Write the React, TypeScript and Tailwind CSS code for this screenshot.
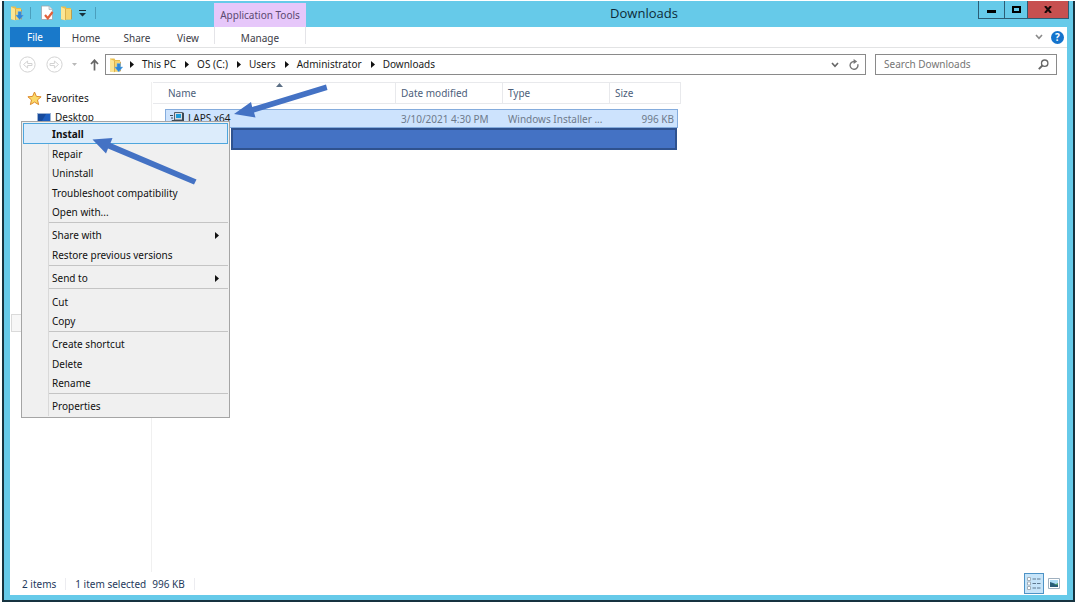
import type { ReactNode } from 'react';

interface MenuEntry {
  label: string;
  submenu?: boolean;
}

const menuGroups: MenuEntry[][] = [
  [
    { label: 'Install' },
    { label: 'Repair' },
    { label: 'Uninstall' },
    { label: 'Troubleshoot compatibility' },
    { label: 'Open with...' },
  ],
  [{ label: 'Share with', submenu: true }, { label: 'Restore previous versions' }],
  [{ label: 'Send to', submenu: true }],
  [{ label: 'Cut' }, { label: 'Copy' }],
  [{ label: 'Create shortcut' }, { label: 'Delete' }, { label: 'Rename' }],
  [{ label: 'Properties' }],
];

const path = ['This PC', 'OS (C:)', 'Users', 'Administrator', 'Downloads'];

const FolderIcon = ({ download = false }: { download?: boolean }) => (
  <svg width="14" height="16" viewBox="0 0 14 16" className="shrink-0" aria-hidden="true">
    <path d="M1 1.5h4.5l.8 1.5H11v11.5H1z" fill="#e9bd4c" />
    <path d="M1 2l4.5 2v11.5L1 14z" fill="#fbe594" />
    <path d="M5.500 4H11v10.500H5.500z" fill="#f6d46f" />
    <path d="M5.500 4v11" stroke="#d0a03c" strokeWidth=".7" />
    <path d="M11 4.500l.8.500v9l-.8.500z" fill="#c9942e" />
    {download && (
      <path d="M8 6.500h3.400V10h2.400L9.700 15 5.600 10H8z" fill="#2f86d6" stroke="#75b8ee" strokeWidth=".5" />
    )}
  </svg>
);

const DocumentIcon = () => (
  <svg width="14" height="16" viewBox="0 0 14 16" className="shrink-0" aria-hidden="true">
    <path d="M1.500 1h7.500l3.500 3.500V14.500h-11z" fill="#fff" stroke="#9aa4ac" strokeWidth=".8" />
    <path d="M9 1v3.500h3.500" fill="#dfe5ea" stroke="#9aa4ac" strokeWidth=".6" />
    <path d="M5 10l2.800 3.200L12.600 7" fill="none" stroke="#e2603a" strokeWidth="2.200" />
  </svg>
);

const CircleArrow = ({ flip = false }: { flip?: boolean }) => (
  <svg width="17" height="17" viewBox="0 0 17 17" className={flip ? 'rotate-180' : ''} aria-hidden="true">
    <circle cx="8.500" cy="8.500" r="7.600" fill="none" stroke="#d3d3d3" />
    <path d="M13 7.500H8.600V5L4.500 8.500l4.100 3.500V9.500H13z" fill="none" stroke="#d3d3d3" />
  </svg>
);

const Triangle = () => (
  <svg width="4" height="7" viewBox="0 0 4 7" className="shrink-0" aria-hidden="true">
    <path d="M0 0l4 3.500L0 7z" fill="#111" />
  </svg>
);

const Chevron = ({ className }: { className: string }) => (
  <svg width="8" height="6" viewBox="0 0 8 6" className={className} aria-hidden="true">
    <path d="M1 1l3 3.400L7 1" fill="none" stroke="currentColor" strokeWidth="1.600" />
  </svg>
);

const TitleBar = () => (
  <header className="flex h-[26px] items-start pl-[6px] pr-[4px]">
    <div className="flex h-[24px] w-[204px] items-center">
      <button aria-label="Downloads folder">
        <FolderIcon download />
      </button>
      <span className="ml-[6px] mr-[9px] h-[12px] w-px bg-[#4b9fbd]" />
      <button aria-label="Properties">
        <DocumentIcon />
      </button>
      <button aria-label="New folder" className="ml-[6px]">
        <FolderIcon />
      </button>
      <button aria-label="Customize toolbar" className="ml-[5px]">
        <svg width="7" height="7" viewBox="0 0 7 7" aria-hidden="true">
          <path d="M0 0h7v1H0zM0 3h7L3.500 6.500z" fill="#16313c" />
        </svg>
      </button>
      <span className="ml-[9px] h-[12px] w-px bg-[#4b9fbd]" />
    </div>
    <div className="mt-[2px] h-[24px] w-[92px] bg-[#e6c7fa] text-center leading-[24px] text-[#5b4a70]">
      Application Tools
    </div>
    <h1 className="flex-1 pl-[4px] text-center font-['Open_Sans','Noto_Sans',sans-serif] text-[13px] leading-[24px] text-[#0d2a38]">
      Downloads
    </h1>
    <div className="flex h-[18px] border border-t-0 border-[#2c5d75]">
      <button aria-label="Minimize" className="flex w-[25px] items-center justify-center">
        <span className="mt-[3px] h-[3px] w-[9px] bg-black" />
      </button>
      <button
        aria-label="Maximize"
        className="flex w-[24px] items-center justify-center border-x border-[#2c5d75]"
      >
        <span className="h-[7px] w-[9px] border-2 border-black" />
      </button>
      <button aria-label="Close" className="flex w-[40px] items-center justify-center bg-[#c75050]">
        <svg width="8" height="7" viewBox="0 0 8 7" aria-hidden="true">
          <path d="M1 0l6 7M7 0L1 7" stroke="#140808" strokeWidth="2" />
        </svg>
      </button>
    </div>
  </header>
);

const RibbonTabs = () => (
  <nav className="flex h-[21px] items-stretch border-b border-[#e2e3e4] text-[#3c3c46]">
    <button className="w-[50px] bg-[#1979ca] pt-px text-white">File</button>
    <button className="w-[52px] pt-[2px]">Home</button>
    <button className="w-[50px] pt-[2px]">Share</button>
    <button className="w-[52px] pt-[2px]">View</button>
    <button className="mb-[3px] w-[92px] border-x border-[#e4e4e8] pt-[4px]">Manage</button>
    <div className="flex flex-1 items-center justify-end gap-[8px] pr-[3px]">
      <button aria-label="Expand ribbon">
        <Chevron className="text-[#8a8a8a]" />
      </button>
      <button
        aria-label="Help"
        className="flex size-[13px] items-center justify-center rounded-full bg-[#1473cc] font-bold leading-[13px] text-white"
      >
        ?
      </button>
    </div>
  </nav>
);

const AddressBar = () => (
  <div className="flex h-[33px] items-center pl-[9px] pr-[10px]">
    <button aria-label="Back">
      <CircleArrow />
    </button>
    <button aria-label="Forward" className="ml-[10px]">
      <CircleArrow flip />
    </button>
    <button aria-label="Recent locations" className="ml-[9px]">
      <svg width="5" height="3" viewBox="0 0 5 3" aria-hidden="true">
        <path d="M0 0h5L2.500 3z" fill="#b9b9b9" />
      </svg>
    </button>
    <button aria-label="Up" className="ml-[13px]">
      <svg width="9" height="12" viewBox="0 0 9 12" aria-hidden="true">
        <path d="M4.500 11.500V1.500M1 5l3.500-3.800L8 5" fill="none" stroke="#666" strokeWidth="1.700" />
      </svg>
    </button>
    <div className="ml-[6px] flex h-[21px] flex-1 items-center border border-[#8a8a8a] pl-[3px] pr-[6px]">
      <FolderIcon download />
      <ol className="ml-[7px] flex flex-1 items-center gap-[9px] text-[#1a1a1a]">
        {path.map((part) => (
          <li key={part} className="flex items-center gap-[8px]">
            <Triangle />
            <a href="#">{part}</a>
          </li>
        ))}
      </ol>
      <button aria-label="Previous locations">
        <Chevron className="text-[#666]" />
      </button>
      <button aria-label="Refresh" className="ml-[10px]">
        <svg width="10" height="11" viewBox="0 0 10 11" aria-hidden="true">
          <path d="M8.700 5.200A3.900 3.900 0 1 1 5 2.500" fill="none" stroke="#777" strokeWidth="1.400" />
          <path d="M4.600 0l3.600 2.500-3.600 2.500z" fill="#777" />
        </svg>
      </button>
    </div>
    <div className="ml-[9px] flex h-[21px] w-[182px] items-center border border-[#8a8a8a] pl-[8px] pr-[7px]">
      <input
        type="text"
        aria-label="Search Downloads"
        placeholder="Search Downloads"
        className="min-w-0 flex-1 outline-none placeholder:text-[#757575]"
      />
      <svg width="11" height="11" viewBox="0 0 11 11" aria-hidden="true">
        <circle cx="6.700" cy="4.200" r="3.200" fill="none" stroke="#666" strokeWidth="1.300" />
        <path d="M4.400 6.500L.8 10.200" stroke="#666" strokeWidth="1.800" />
      </svg>
    </div>
  </div>
);

const Sidebar = () => (
  <aside className="flex w-[142px] shrink-0 flex-col border-r border-[#f0f0f0] pt-[7px] text-[#1a1a1a]">
    <div className="flex h-[19px] items-center gap-[4px] pl-[17px]">
      <svg width="15" height="15" viewBox="0 0 15 15" aria-hidden="true">
        <path
          d="M7.500 1l1.900 4.400 4.700.4-3.600 3.100 1.100 4.700-4.100-2.500-4.100 2.500 1.100-4.700L.9 5.800l4.700-.4z"
          fill="#fbd968"
          stroke="#dd8a2a"
        />
      </svg>
      Favorites
    </div>
    <div className="flex h-[19px] items-center gap-[4px] pl-[27px]">
      <svg width="14" height="12" viewBox="0 0 14 12" aria-hidden="true">
        <path d="M0 1h14v9H0z" fill="#9db4d4" />
        <path d="M1 2h12v7H1z" fill="#1e5fc0" />
        <path d="M1 2h8L5 9H1z" fill="#174a9c" />
        <path d="M4 11h6v1H4z" fill="#8796ab" />
      </svg>
      Desktop
    </div>
    <div className="mx-px mt-[187px] h-[18px] border border-[#dadada] bg-[#f7f7f7]" />
  </aside>
);

const HeaderCell = ({ width, children }: { width: string; children: ReactNode }) => (
  <th scope="col" className={`${width} h-[22px] border border-l-0 border-[#e8e9ec] pl-[5px] font-normal`}>
    {children}
  </th>
);

const FileList = () => (
  <section className="flex-1 pl-px">
    <table className="w-[528px] table-fixed border-separate border-spacing-0 text-left text-[#4c607a]">
      <thead>
        <tr>
          <th
            scope="col"
            aria-sort="ascending"
            className="relative h-[22px] w-[243px] border border-l-0 border-[#e8e9ec] pl-[15px] font-normal"
          >
            Name
            <svg width="7" height="4" viewBox="0 0 7 4" className="absolute left-[123px] top-0" aria-hidden="true">
              <path d="M0 4L3.500 0 7 4z" fill="#5b6f85" />
            </svg>
          </th>
          <HeaderCell width="w-[107px]">Date modified</HeaderCell>
          <HeaderCell width="w-[107px]">Type</HeaderCell>
          <HeaderCell width="w-[71px]">Size</HeaderCell>
        </tr>
      </thead>
      <tbody className="text-[#6d7a8b]">
        <tr>
          <td className="pl-[12px] pt-[5px]">
            <div className="flex h-[19px] items-center gap-[4px] border-y border-l border-[#84acdd] bg-[#cde3fd] pl-[4px] text-[#1a1a1a]">
              <svg width="14" height="14" viewBox="0 0 14 14" className="shrink-0" aria-hidden="true">
                <path d="M4.500.500h8v7.500h-8z" fill="#d8dde2" stroke="#55606c" />
                <path d="M6 2h5v4H6z" fill="#1d9bd8" />
                <path d="M2 8.500h10.500V13H2z" fill="#b9c0c8" stroke="#3f4954" />
                <path d="M0 3.500h3M1 6h2M12.500 1h1v11h-1z" stroke="#3f4954" />
              </svg>
              LAPS x64
            </div>
          </td>
          <td className="pt-[5px]">
            <div className="h-[19px] border-y border-[#84acdd] bg-[#cde3fd] pl-[5px] leading-[18px]">
              3/10/2021 4:30 PM
            </div>
          </td>
          <td className="pt-[5px]">
            <div className="h-[19px] truncate border-y border-[#84acdd] bg-[#cde3fd] pl-[5px] leading-[18px]">
              Windows Installer ...
            </div>
          </td>
          <td className="pr-[3px] pt-[5px]">
            <div className="h-[19px] border-y border-r border-[#84acdd] bg-[#cde3fd] pr-[3px] text-right leading-[18px]">
              996 KB
            </div>
          </td>
        </tr>
      </tbody>
    </table>
    {/* redacted second file */}
    <div className="ml-[78px] h-[22px] w-[446px] border-2 border-[#2f528f] bg-[#4472c4]" />
  </section>
);

const StatusBar = () => (
  <footer className="flex h-[23px] items-center pl-[12px] pr-[7px] text-[#1e395b]">
    <span className="pt-px">2 items</span>
    <span className="ml-[9px] mr-[9px] h-[12px] w-px bg-[#ececf0]" />
    <span className="pt-px">1 item selected</span>
    <span className="ml-[6px] pt-px">996 KB</span>
    <span className="ml-[9px] h-[12px] w-px bg-[#ececf0]" />
    <button
      aria-label="Details view"
      className="ml-auto flex h-[21px] w-[20px] items-center justify-center border border-[#4d93c6] bg-[#c6e4f9]"
    >
      <svg width="14" height="13" viewBox="0 0 14 13" aria-hidden="true">
        <path d="M.5.500h3v3h-3zM.5 5h3v3h-3zM.5 9.500h3v3h-3z" fill="#fff" stroke="#a3afb9" />
        <path d="M5.500 2h3.500M10 2h3.500M5.500 6.500h3.500M10 6.500h3.500M5.500 11h3.500M10 11h3.500" stroke="#5f7990" />
      </svg>
    </button>
    <button aria-label="Thumbnail view" className="ml-[4px]">
      <svg width="12" height="11" viewBox="0 0 12 11" aria-hidden="true">
        <path d="M.5.500h11v10H.5z" fill="#fff" stroke="#9fb0bf" />
        <path d="M2 2h8v7H2z" fill="#aadcf5" />
        <path d="M2 4l3 1 5 2v2H2z" fill="#285e78" />
        <path d="M6 7l4-2v2z" fill="#4b9a6a" />
      </svg>
    </button>
  </footer>
);

const ContextMenu = () => (
  <div
    role="menu"
    className="absolute left-[21px] top-[121px] flex h-[297px] w-[209px] flex-col border border-[#a5a5a5] bg-[#f0f0f0] p-px text-[#111]"
  >
    <span className="absolute bottom-px left-[26px] top-[22px] w-px bg-[#d9d9d9]" />
    {menuGroups.map((group, index) => (
      <div key={group[0].label} className="contents">
        {index > 0 && (
          <div role="separator" className="ml-[26px] flex h-[4px] items-start">
            <span className="h-px w-full bg-[#c4c4c4]" />
          </div>
        )}
        {group.map((entry) => (
          <button
            key={entry.label}
            role="menuitem"
            className={
              entry.label === 'Install'
                ? 'relative flex flex-1 items-center border border-[#4ea6dd] bg-[#dcecfb] pl-[28px] font-bold leading-[14px]'
                : 'flex flex-1 items-center justify-between pl-[29px] pr-[9px] leading-[14px]'
            }
          >
            {entry.label}
            {entry.submenu && <Triangle />}
          </button>
        ))}
      </div>
    ))}
  </div>
);

const Arrows = () => (
  <>
    <svg
      width="96"
      height="36"
      viewBox="232 84 96 36"
      className="pointer-events-none absolute left-[232px] top-[84px]"
      aria-hidden="true"
    >
      <path d="M234 114l17-12 1.200 5L326 84.500l1.500 5.500-73.500 22.500 1.500 5z" fill="#4472c4" />
    </svg>
    <svg
      width="106"
      height="50"
      viewBox="91 136 106 50"
      className="pointer-events-none absolute left-[91px] top-[136px]"
      aria-hidden="true"
    >
      <path d="M92.500 139.500l20-1.500-2 5 86 36.500-2.500 5-86-36-2 5z" fill="#4472c4" />
    </svg>
  </>
);

const App = () => (
  <div className="relative flex h-screen flex-col bg-white pb-[3px] pl-[2px] pr-px pt-px font-['Noto_Sans','Open_Sans',sans-serif] text-[10px]">
    <div className="flex flex-1 flex-col border-x-2 border-b-2 border-[#163340] bg-[#66cae9]">
      <TitleBar />
      <div className="mx-[6px] mb-[5px] flex flex-1 flex-col bg-white">
        <RibbonTabs />
        <AddressBar />
        <main className="flex flex-1 pt-px">
          <Sidebar />
          <FileList />
        </main>
        <StatusBar />
      </div>
    </div>
    <ContextMenu />
    <Arrows />
  </div>
);

export default App;
